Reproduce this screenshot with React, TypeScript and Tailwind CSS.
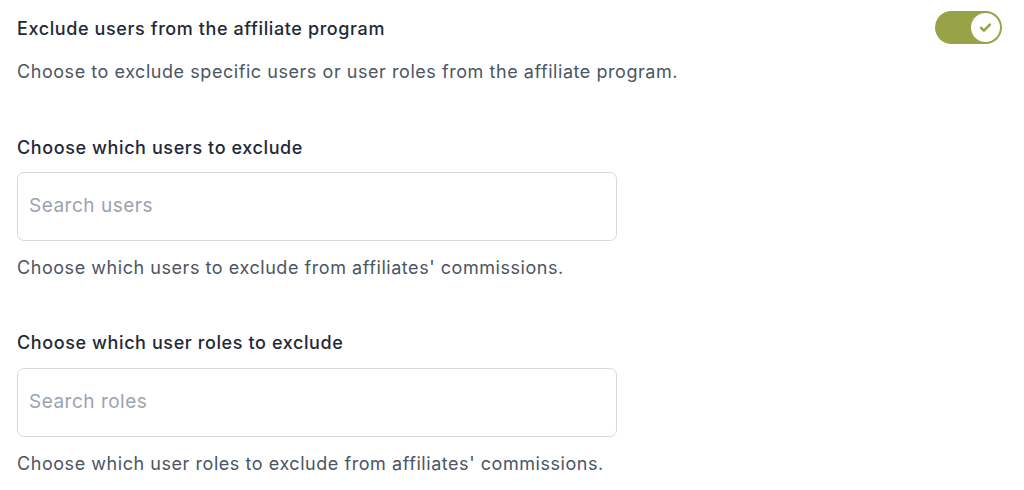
export default function App() {
  const font = { fontFamily: "Inter, 'Noto Sans', sans-serif" };
  return (
    <div className="w-[1024px] h-[490px] bg-white text-[#1f2937] overflow-hidden" style={font}>
      <div className="flex items-start justify-between pl-[17px] pr-[22px] pt-[16px]">
        <div className="text-[18px] tracking-[0.6px] font-medium leading-[26px] text-[#1f2937]">Exclude users from the affiliate program</div>
        <div className="relative mt-[-5px] w-[67px] h-[33px] rounded-full bg-[#98a246]">
          <div className="absolute right-[2px] top-[2px] w-[29px] h-[29px] rounded-full bg-white flex items-center justify-center">
            <svg width="15" height="15" viewBox="0 0 24 24" fill="none" stroke="#98a246" strokeWidth="4" strokeLinecap="round" strokeLinejoin="round">
              <path d="M5 12.5l4.5 4.5L19 7.5" />
            </svg>
          </div>
        </div>
      </div>
      <div className="pl-[17px] pt-[15px] text-[18px] tracking-[0.55px] leading-[26px] text-[#4b5563]">
        Choose to exclude specific users or user roles from the affiliate program.
      </div>
      <div className="pl-[17px] pt-[50px] flex flex-col">
        <div className="text-[18px] tracking-[0.6px] font-medium leading-[26px] text-[#1f2937]">Choose which users to exclude</div>
        <div className="mt-[11px] w-[600px] h-[69px] rounded-[7px] border border-[#d6d9de] flex items-center px-[11px]">
          <span className="text-[19px] tracking-[0.5px] text-[#9ca3af]">Search users</span>
        </div>
        <div className="mt-[14px] text-[18px] tracking-[0.55px] leading-[26px] text-[#4b5563]">Choose which users to exclude from affiliates' commissions.</div>
        <div className="mt-[49px] text-[18px] tracking-[0.6px] font-medium leading-[26px] text-[#1f2937]">Choose which user roles to exclude</div>
        <div className="mt-[12px] w-[600px] h-[69px] rounded-[7px] border border-[#d6d9de] flex items-center px-[11px]">
          <span className="text-[19px] tracking-[0.5px] text-[#9ca3af]">Search roles</span>
        </div>
        <div className="mt-[14px] text-[18px] tracking-[0.55px] leading-[26px] text-[#4b5563]">Choose which user roles to exclude from affiliates' commissions.</div>
      </div>
    </div>
  );
}
